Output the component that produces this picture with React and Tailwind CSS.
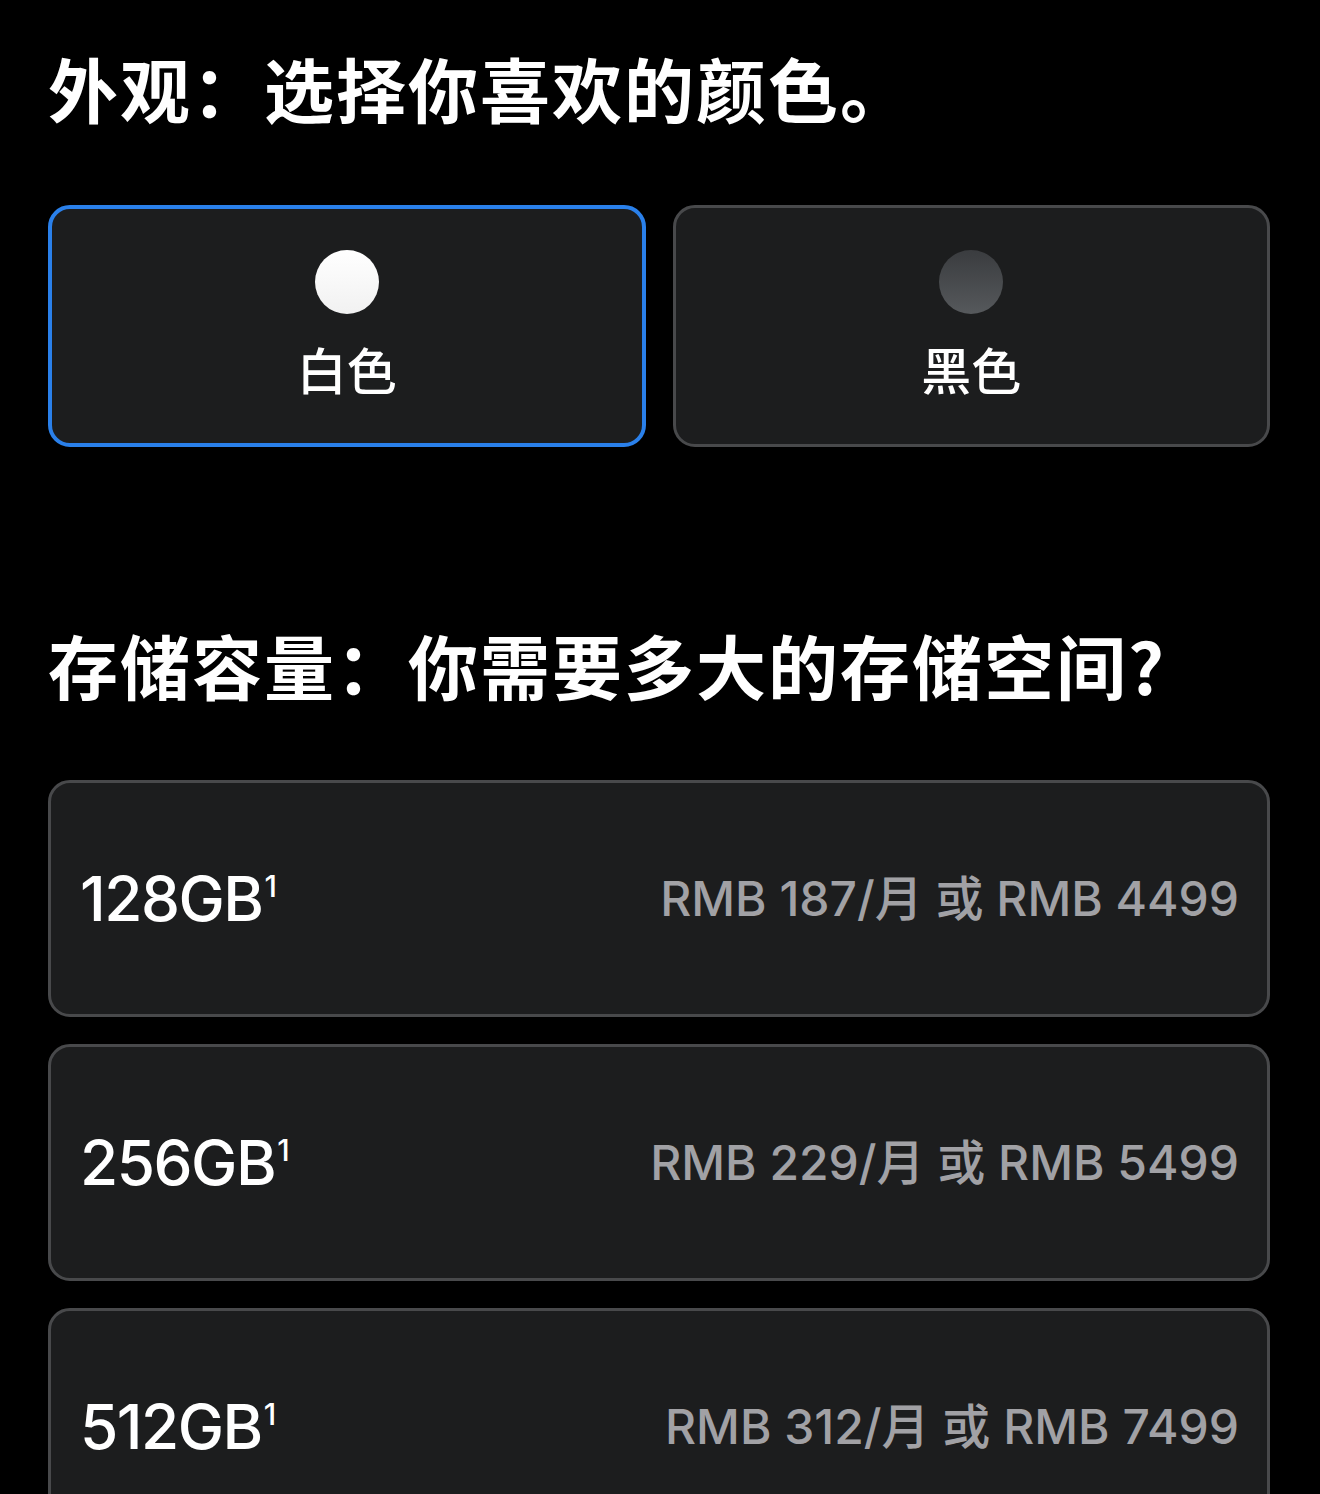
const cjk = { fontFamily: '"Noto Sans CJK SC", sans-serif' };
const latin = { fontFamily: 'Inter, "Noto Sans CJK SC", sans-serif' };

const colors = [
  { name: '白色', selected: true, swatch: 'bg-gradient-to-b from-[#ffffff] to-[#f1f1f1]' },
  { name: '黑色', selected: false, swatch: 'bg-gradient-to-b from-[#3a3c3f] to-[#56595c]' },
];

const storage = [
  { size: '128GB', monthly: '187', price: '4499' },
  { size: '256GB', monthly: '229', price: '5499' },
  { size: '512GB', monthly: '312', price: '7499' },
];

function ColorCard({ name, selected, swatch }) {
  return (
    <button
      className={
        'flex h-[242px] flex-col items-center rounded-[22px] bg-[#1c1d1e] pt-[41px] ' +
        (selected ? 'border-[4px] border-[#2a80ea]' : 'border-[3px] border-[#48494b] pt-[42px]')
      }
    >
      <span className={'block h-16 w-16 rounded-full ' + swatch} />
      <span style={cjk} className="mt-[29px] text-[50px] leading-[50px] font-medium text-white">
        {name}
      </span>
    </button>
  );
}

function StorageCard({ size, monthly, price }) {
  return (
    <div className="flex h-[237px] items-center justify-between rounded-[22px] border-[3px] border-[#48494b] bg-[#1c1d1e] pl-[29px] pr-[28px]">
      <span style={latin} className="text-[62px] leading-none font-medium tracking-[-1.5px] text-white">
        {size}
        <sup className="relative -top-[2px] ml-[2px] text-[30px] align-[22px]">1</sup>
      </span>
      <span style={latin} className="text-[48px] leading-none font-medium text-[#a1a1a5]">
        RMB {monthly}/月 或 RMB {price}
      </span>
    </div>
  );
}

export default function App() {
  return (
    <div className="min-h-screen overflow-hidden bg-black pl-[48px] pr-[50px] pt-[53px]">
      <h2 style={cjk} className="text-[70px] leading-[70px] tracking-[2px] text-white">
        <span className="font-bold">外观：</span>
        <span className="font-semibold">选择你喜欢的颜色。</span>
      </h2>
      <div className="mt-[82px] grid grid-cols-2 gap-[27px]">
        {colors.map((c) => (
          <ColorCard key={c.name} {...c} />
        ))}
      </div>
      <h2 style={cjk} className="mt-[183px] text-[70px] leading-[70px] tracking-[2px] text-white">
        <span className="font-bold">存储容量：</span>
        <span className="font-semibold">你需要多大的存储空间?</span>
      </h2>
      <div className="mt-[80px] flex flex-col gap-[27px]">
        {storage.map((s) => (
          <StorageCard key={s.size} {...s} />
        ))}
      </div>
    </div>
  );
}
